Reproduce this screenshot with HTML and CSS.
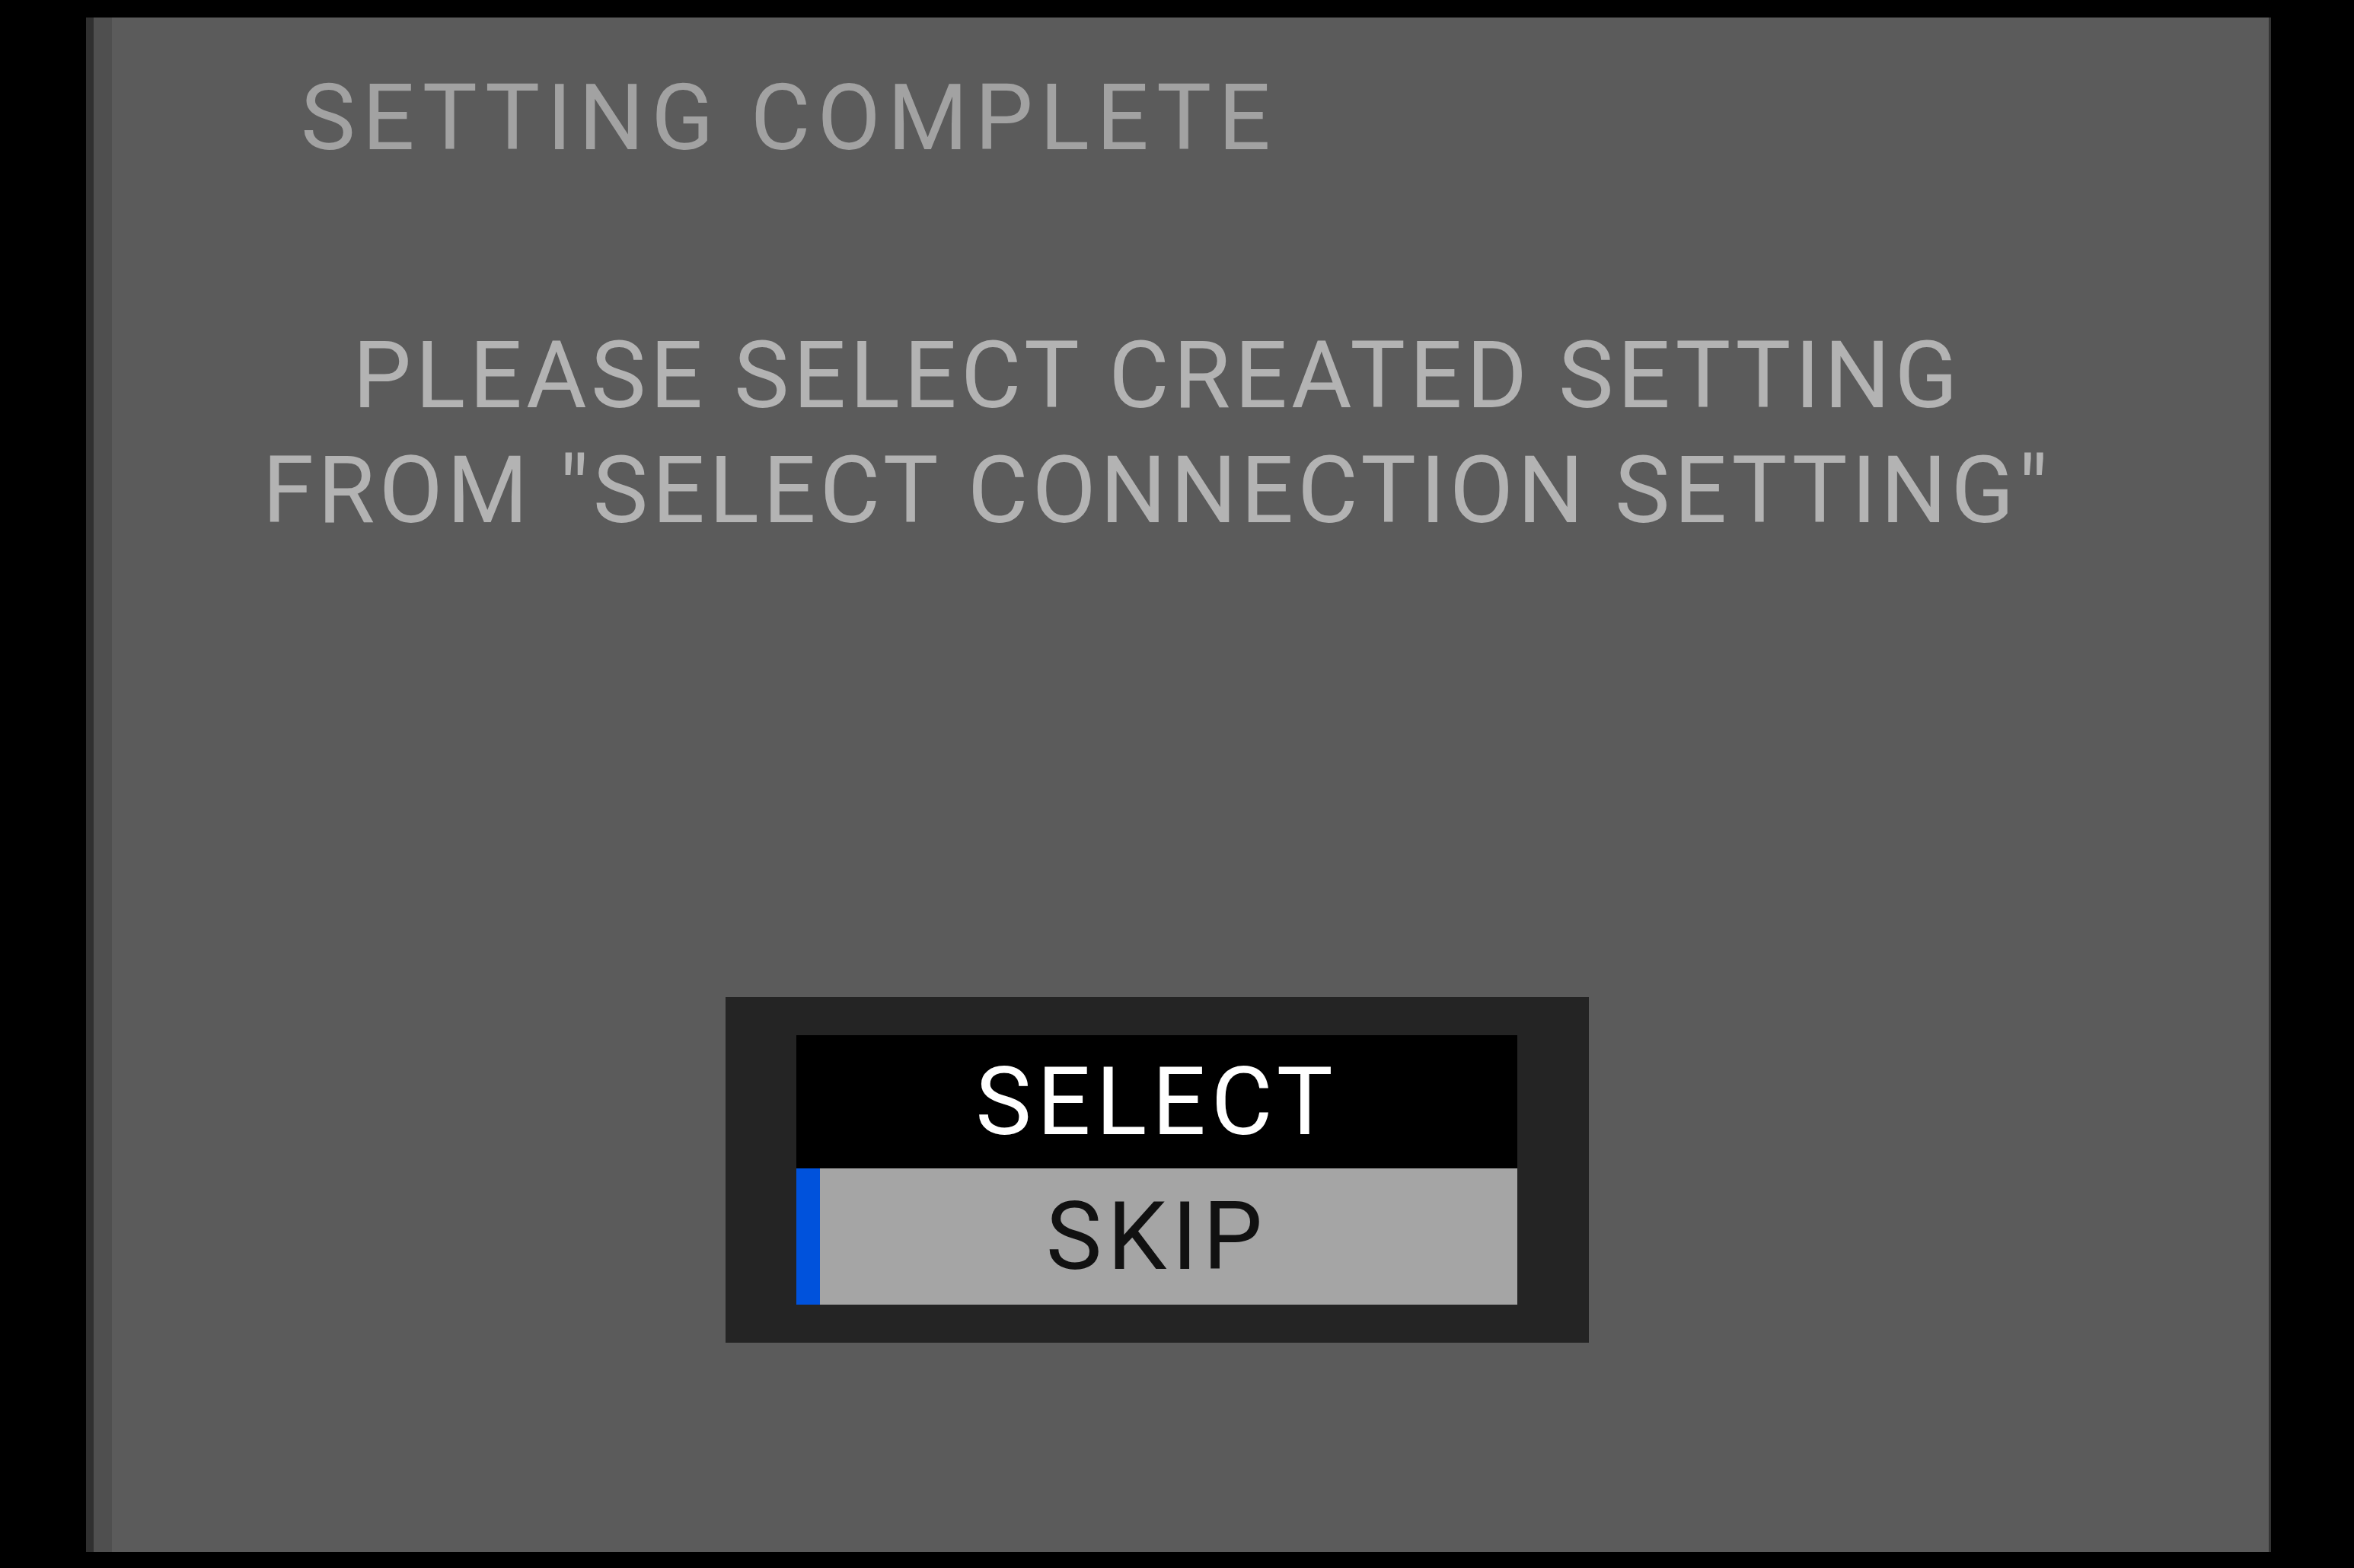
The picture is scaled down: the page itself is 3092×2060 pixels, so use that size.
FILE: index.html
```html
<!DOCTYPE html>
<html lang="en">
<head>
<meta charset="utf-8">
<title>Setting Complete</title>
<link rel="stylesheet" href="styles.css">
</head>
<body>
<div class="screen">
  <main class="panel">
    <h1 class="title">SETTING COMPLETE</h1>
    <p class="message">PLEASE SELECT CREATED SETTING<br>FROM "SELECT CONNECTION SETTING"</p>
    <div class="dialog">
      <ul class="menu">
        <li class="item item-select">SELECT</li>
        <li class="item item-skip">SKIP</li>
      </ul>
    </div>
  </main>
</div>
</body>
</html>
```

FILE: styles.css
```css
html, body {
  margin: 0;
  padding: 0;
  background: #000;
}
body {
  width: 3092px;
  height: 2060px;
  overflow: hidden;
  font-family: Roboto, "Liberation Sans", Arial, sans-serif;
}
.screen {
  padding: 23px 0 0 113px;
}
.panel {
  box-sizing: border-box;
  width: 2870px;
  height: 2016px;
  border-left: 10px solid #303030;
  border-right: 3px solid #333;
  background: linear-gradient(to right, #4f4f4f 0, #4f4f4f 24px, #5b5b5b 24px);
  padding: 71px 63px 0 0;
  display: flex;
  flex-direction: column;
}
.title {
  margin: 0 0 0 272px;
  font-size: 121px;
  line-height: 122px;
  font-weight: 400;
  letter-spacing: 9px;
  color: #a2a2a2;
}
.message {
  margin: 202px 0 0 0;
  font-size: 122px;
  line-height: 151px;
  letter-spacing: 5.3px;
  color: #b3b3b3;
  text-align: center;
}
.dialog {
  align-self: center;
  margin-top: 590px;
  background: #242424;
  padding: 50px 94px 50px 93px;
}
.menu {
  list-style: none;
  margin: 0;
  padding: 0;
  width: 947px;
}
.item {
  display: flex;
  align-items: center;
  justify-content: center;
  font-size: 124px;
  line-height: 1;
  letter-spacing: 7px;
  box-sizing: border-box;
}
.item-select {
  height: 175px;
  background: #000;
  color: #fff;
}
.item-skip {
  height: 179px;
  background: #a5a5a5;
  color: #111;
  border-left: 31px solid #0052dc;
  padding-right: 31px;
}
```
